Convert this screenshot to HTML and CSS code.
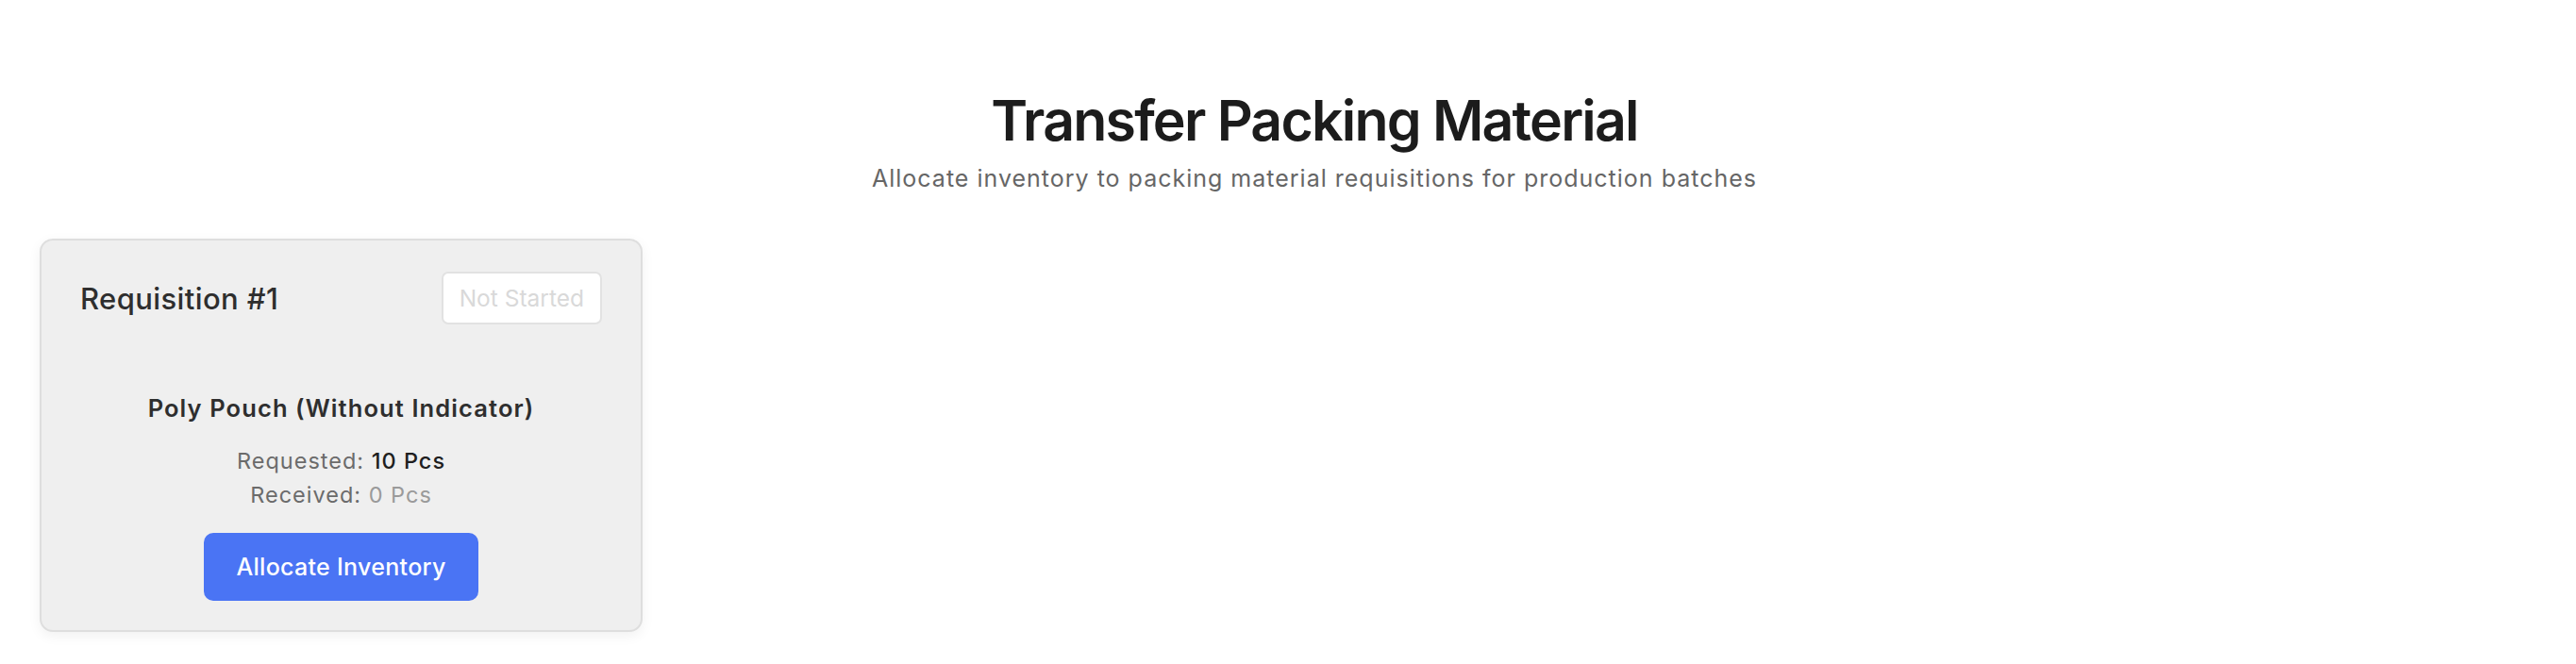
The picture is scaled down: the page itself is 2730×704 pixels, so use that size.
FILE: index.html
```html
<!DOCTYPE html>
<html lang="en">
<head>
<meta charset="utf-8">
<title>Transfer Packing Material</title>
<link rel="stylesheet" href="styles.css">
</head>
<body>
<div class="page">
  <header class="page-header">
    <h1 class="page-title">Transfer Packing Material</h1>
    <p class="page-subtitle">Allocate inventory to packing material requisitions for production batches</p>
  </header>
  <section class="req-grid">
    <article class="req-card">
      <div class="req-head">
        <h2 class="req-title">Requisition #1</h2>
        <span class="status-badge">Not Started</span>
      </div>
      <div class="req-body">
        <h3 class="item-name">Poly Pouch (Without Indicator)</h3>
        <div class="qty-line">Requested: <span class="qty-strong">10 Pcs</span></div>
        <div class="qty-line">Received: <span class="qty-muted">0 Pcs</span></div>
        <button class="allocate-btn" type="button">Allocate Inventory</button>
      </div>
    </article>
  </section>
</div>
</body>
</html>
```

FILE: styles.css
```css
* { box-sizing: border-box; }

html, body {
  margin: 0;
  padding: 0;
  background: #ffffff;
}

body {
  font-family: Inter, "Noto Sans", "Liberation Sans", sans-serif;
  color: #1c1c1c;
}

.page {
  padding: 92px 42px 30px 42px;
}

.page-header {
  text-align: center;
  padding-left: 56px;
}

.page-title {
  margin: 0;
  font-size: 59px;
  line-height: 71px;
  font-weight: 600;
  color: #1c1c1c;
  letter-spacing: -1.8px;
}

.page-subtitle {
  margin: 8px 0 0 0;
  font-size: 25px;
  line-height: 36px;
  color: #666666;
  letter-spacing: 1px;
}

.req-grid {
  margin-top: 46px;
  display: grid;
  grid-template-columns: 639px;
}

.req-card {
  background: #efefef;
  border: 2px solid #dedede;
  border-radius: 14px;
  padding: 33px 41px 31px 41px;
  box-shadow: 0 4px 14px rgba(0, 0, 0, 0.06);
}

.req-head {
  display: flex;
  align-items: center;
  justify-content: space-between;
  height: 56px;
}

.req-title {
  margin: 0;
  font-size: 31px;
  font-weight: 500;
  color: #2e2e2e;
  letter-spacing: 0.4px;
}

.status-badge {
  display: inline-flex;
  align-items: center;
  height: 56px;
  padding: 0 17px;
  background: #ffffff;
  border: 2px solid #e2e2e2;
  border-radius: 7px;
  font-size: 24.5px;
  color: #d9d9d9;
}

.req-body {
  margin-top: 70px;
  display: flex;
  flex-direction: column;
  align-items: center;
  text-align: center;
}

.item-name {
  margin: 0 0 19px 0;
  font-size: 25.5px;
  line-height: 37.5px;
  font-weight: 600;
  color: #2e2e2e;
  letter-spacing: 1.1px;
}

.qty-line {
  font-size: 23.5px;
  line-height: 36.6px;
  color: #6b6b6b;
  letter-spacing: 1px;
}

.qty-strong {
  color: #1f1f1f;
  font-weight: 500;
}

.qty-muted {
  color: #9a9a9a;
}

.allocate-btn {
  margin-top: 21px;
  height: 72px;
  padding: 0 34px;
  border: none;
  border-radius: 10px;
  background: #4a74f4;
  color: #ffffff;
  font-family: inherit;
  font-size: 25px;
  font-weight: 500;
  letter-spacing: 0.3px;
}
```
